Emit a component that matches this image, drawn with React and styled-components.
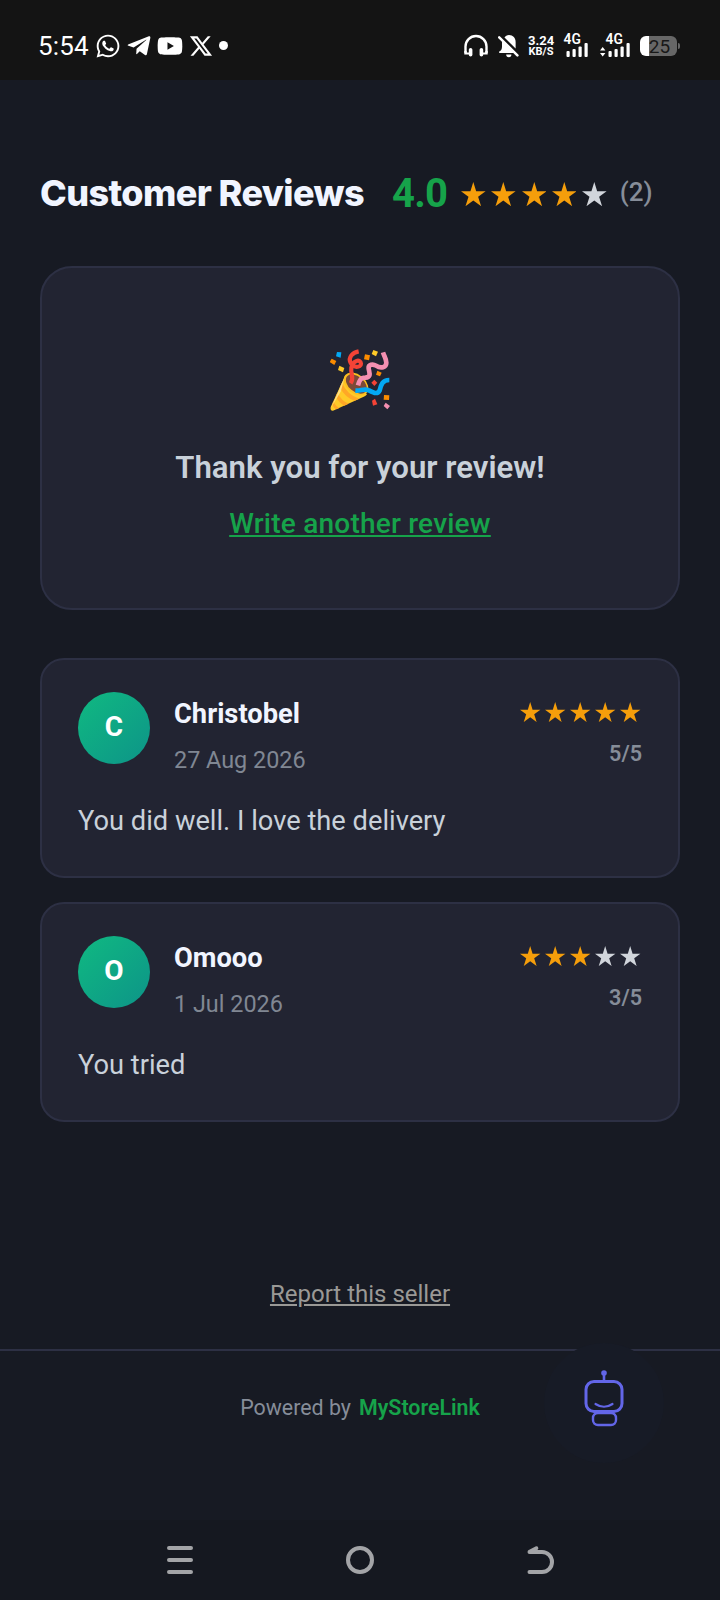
import React from 'react';
import styled, { createGlobalStyle } from 'styled-components';
import { FaWhatsapp, FaTelegramPlane, FaYoutube } from 'react-icons/fa';
import { RiTwitterXLine } from 'react-icons/ri';

const GlobalStyle = createGlobalStyle`
  * { box-sizing: border-box; }
  body {
    margin: 0;
    background: #171a23;
    font-family: Roboto, sans-serif;
  }
  svg { display: block; flex-shrink: 0; }
`;

// ------------- Layout -------------
const Screen = styled.div`
  position: relative;
  display: flex;
  flex-direction: column;
  width: 720px;
  height: 1600px;
  overflow: hidden;
`;

const Page = styled.main`
  flex: 1;
  padding: 86px 40px 0;
`;

// ------------- Status bar -------------
const StatusBar = styled.header`
  display: flex;
  align-items: center;
  justify-content: space-between;
  height: 80px;
  padding: 11px 43px 0 38px;
  background: #141414;
  color: #fff;
`;

const StatusGroup = styled.div`
  display: flex;
  align-items: center;
  gap: ${({ $gap }) => $gap}px;
`;

const Clock = styled.span`
  width: 51.5px;
  font-size: 26px;
  line-height: 30px;
  letter-spacing: 0.2px;
  white-space: nowrap;
`;

const Dot = styled.span`
  width: 9px;
  height: 9px;
  border-radius: 50%;
  background: #fff;
`;

const NetSpeed = styled.div`
  width: 26px;
  margin-right: -6px;
  font-weight: 700;
  text-align: center;
  white-space: nowrap;
`;

const NetValue = styled.div`
  font-size: 13px;
  line-height: 13px;
`;

const NetUnit = styled.div`
  font-size: 11px;
  line-height: 10px;
`;

const Signal = styled.div`
  position: relative;
  width: 31px;
  height: 24px;
  margin-right: ${({ $spaced }) => ($spaced ? 1.5 : 0)}px;
`;

const SignalLabel = styled.span`
  position: absolute;
  top: -1px;
  left: 6px;
  font-size: 13.8px;
  line-height: 13px;
  font-weight: 600;
`;

const Battery = styled.div`
  position: relative;
  width: 37px;
  height: 20px;
  padding-left: 2px;
  border-radius: 6px;
  background: linear-gradient(90deg, #fff 9px, #676767 9px);
  color: #181818;
  font-size: 19px;
  line-height: 21px;
  text-align: center;

  &::after {
    content: '';
    position: absolute;
    top: 7px;
    right: -3px;
    width: 2px;
    height: 6px;
    border-radius: 0 2px 2px 0;
    background: #676767;
  }
`;

// ------------- Reviews heading -------------
const HeadingRow = styled.div`
  display: flex;
  align-items: center;
  height: 54px;
  margin-bottom: 46px;
`;

const Heading = styled.h2`
  width: 352px;
  margin: 0;
  color: #f1f5ff;
  font-family: Inter, sans-serif;
  font-size: 36px;
  font-weight: 800;
  letter-spacing: -0.6px;
  white-space: nowrap;
`;

const Score = styled.span`
  width: 69px;
  color: #16a34a;
  font-size: 40px;
  font-weight: 700;
  letter-spacing: -0.8px;
`;

const Count = styled.span`
  margin-left: 13px;
  padding-bottom: 3px;
  color: #868d99;
  font-size: 26px;
  font-weight: 500;
`;

const StarRow = styled.div`
  display: flex;
  gap: ${({ $gap }) => $gap}px;
`;

const HeadingStars = styled.div`
  padding-top: 2px;
`;

// ------------- Cards -------------
const Card = styled.section`
  border: 2px solid #2d3044;
  background: #222432;
`;

const ThanksCard = styled(Card)`
  display: flex;
  flex-direction: column;
  align-items: center;
  height: 344px;
  margin-bottom: 48px;
  padding-top: 81px;
  border-radius: 32px;
`;

const ThanksTitle = styled.p`
  margin: 37px 0 18px;
  color: #c9d1da;
  font-size: 31.2px;
  line-height: 40px;
  font-weight: 600;
`;

const WriteLink = styled.a`
  color: #16a34a;
  font-size: 28px;
  line-height: 36px;
  font-weight: 500;
  letter-spacing: 0.22px;
  text-decoration: underline;
`;

const ReviewCard = styled(Card)`
  height: 220px;
  margin-bottom: 24px;
  padding: 32px 36px;
  border-radius: 24px;
`;

const ReviewTop = styled.div`
  display: flex;
  height: 107px;
`;

const Avatar = styled.div`
  width: 72px;
  height: 72px;
  margin-right: 24px;
  border-radius: 50%;
  background: linear-gradient(135deg, #10b981, #0d9488);
  color: #fff;
  font-size: 28px;
  line-height: 69px;
  font-weight: 700;
  text-align: center;
`;

const Author = styled.div`
  flex: 1;
`;

const Name = styled.div`
  padding-top: 1px;
  color: #f1f5ff;
  font-size: 27.3px;
  line-height: 43px;
  font-weight: 700;
`;

const ReviewDate = styled.div`
  margin-top: 6px;
  color: #808793;
  font-size: 23.4px;
  line-height: 36px;
`;

const Rating = styled.div`
  display: flex;
  flex-direction: column;
  align-items: flex-end;
  padding-top: 10px;
`;

const CardStars = styled.div`
  padding-right: 1.5px;
`;

const RatingValue = styled.span`
  margin-top: 19px;
  color: #868d99;
  font-size: 21.6px;
  line-height: 26px;
  font-weight: 600;
`;

const Comment = styled.p`
  margin: 0;
  color: #c9d1da;
  font-size: 27.25px;
  line-height: 44px;
`;

// ------------- Footer -------------
const ReportRow = styled.div`
  margin-top: 156px;
  text-align: center;
`;

const ReportLink = styled.a`
  color: #9a9996;
  font-size: 24px;
  line-height: 32px;
  text-decoration: underline;
`;

const Footer = styled.footer`
  display: flex;
  justify-content: center;
  gap: 8px;
  height: 171px;
  padding-top: 43px;
  border-top: 2px solid #2d3044;
  color: #868d99;
  font-size: 21.4px;
  line-height: 28px;

  strong {
    color: #16a34a;
    font-weight: 600;
  }
`;

const ChatButton = styled.button`
  position: absolute;
  left: 544px;
  top: 1343px;
  width: 120px;
  height: 120px;
  padding: 0 36px 6px;
  border: 0;
  border-radius: 50%;
  background: #171b26;
`;

const NavBar = styled.nav`
  display: flex;
  align-items: center;
  justify-content: center;
  gap: 152px;
  height: 80px;
  background: #151820;
`;

// ------------- Icons -------------
function Star({ size, filled }) {
  return (
    <svg width={size} height={size} viewBox="0 0 24 24">
      <path
        d="M12 0l2.8 9.1H24l-7.3 5.3 2.9 9.2L12 18l-7.6 5.6 2.9-9.2L0 9.1h9.2z"
        fill={filled ? '#f59e0b' : '#d1d5db'}
      />
    </svg>
  );
}

function Stars({ value, size, gap }) {
  return (
    <StarRow $gap={gap}>
      {[1, 2, 3, 4, 5].map(n => (
        <Star key={n} size={size} filled={n <= value} />
      ))}
    </StarRow>
  );
}

function Headphones() {
  return (
    <svg width="24" height="24" viewBox="0 0 24 24">
      <path d="M1.5 19v-6.5a10.5 10.5 0 0 1 21 0V19" fill="none" stroke="#fff" strokeWidth="2.4" />
      <rect x="4.8" y="14" width="3.6" height="8.6" rx="1.8" fill="#fff" />
      <rect x="15.6" y="14" width="3.6" height="8.6" rx="1.8" fill="#fff" />
      <path d="M.3 17v3.4h4.9v-2H2.7V17zM23.7 17v3.4h-4.9v-2h2.5V17z" fill="#fff" />
    </svg>
  );
}

function BellOff() {
  return (
    <svg width="21" height="24" viewBox="0 0 21 24">
      <path d="M6.5 3.5C7.4 2 9 1 11 1c4 0 6.6 3 6.6 6.8v6.6z" fill="#fff" />
      <path d="M4 7.2 16 19H1.2v-1.4c2-1 2.8-2.4 2.8-4.8z" fill="#fff" />
      <path d="M8.2 20.6h5.2a2.6 2.6 0 0 1-5.2 0z" fill="#fff" />
      <path d="M1.2 3.4 19.4 21.4" stroke="#fff" strokeWidth="2.5" strokeLinecap="round" />
    </svg>
  );
}

function SignalBars({ arrows }) {
  return (
    <svg width="31" height="24" viewBox="0 0 31 24">
      {arrows && <path d="M0 16.4 2.7 13l2.7 3.4zM0 19 2.7 22.6l2.7-3.6z" fill="#fff" />}
      <rect x="8.5" y="17" width="3.2" height="6" rx="1" fill="#fff" />
      <rect x="14.5" y="15" width="3.2" height="8" rx="1" fill="#fff" />
      <rect x="20.5" y="12.5" width="3.2" height="10.5" rx="1" fill="#fff" />
      <rect x="26.5" y="9" width="3.2" height="14" rx="1" fill="#fff" />
    </svg>
  );
}

function PartyPopper() {
  return (
    <svg width="60" height="62" viewBox="90 57 180 186">
      <path d="M92 231 134 140 201 193Q196 200 178 206L99 242Q90 243 92 231z" fill="#ffca28" />
      <path d="M126 158 119 172Q137 205 164 212L178 206Q141 194 126 158z" fill="#ffa726" />
      <path d="M112 188 107 199Q119 222 133 227L146 221Q124 212 112 188z" fill="#ffa726" />
      <path d="M100 214 97 222Q101 235 109 238L118 234Q107 229 100 214z" fill="#ffa726" />
      <path d="M134 141 94 232 122 185z" fill="#ffe082" />
      <ellipse cx="168" cy="162" rx="42" ry="28" transform="rotate(40 168 162)" fill="#fdbf1f" />
      <ellipse cx="169" cy="162" rx="36" ry="23" transform="rotate(40 169 162)" fill="#7b4a38" />
      <g fill="none" strokeWidth="14">
        <path d="M176 64C156 68 145 82 151 97C158 115 183 114 183 101C182 86 158 90 154 113C151 133 164 142 152 160" stroke="#f44336" strokeWidth="12.5" />
        <path d="M174 166C178 151 182 143 196 143C215 141 208 128 206 116C204 103 219 101 228 107C243 117 259 112 259 98C259 87 253 80 249 67" stroke="#f48fb1" />
        <path d="M166 182C184 183 191 175 207 181C224 190 233 193 239 181C243 165 247 150 268 150" stroke="#03a9f4" />
      </g>
      <g fill="#fb8c00">
        <path d="M95 86 109 93 103 105 89 96z" />
        <path d="M195 73 210 76 207 91 192 88z" />
        <path d="M232 122 245 128 240 139 228 134z" />
        <path d="M252 195 268 196 267 210 251 209z" />
      </g>
      <path d="M111 66 124 67 122 83 108 79z" fill="#03a9f4" />
      <path d="M118 107 133 114 129 127 114 120z" fill="#ffca28" />
      <path d="M220 60 234 65 228 79 215 72z" fill="#ffca28" />
      <path d="M223 149 232 158 223 168 214 158z" fill="#f44336" />
      <path d="M225 206 232 223 219 227 216 212z" fill="#f44336" />
      <path d="M257 218 270 228 262 238 251 228z" fill="#f48fb1" />
    </svg>
  );
}

function Robot() {
  return (
    <svg width="48" height="60" viewBox="0 0 48 60" fill="none" stroke="#6366e8">
      <circle cx="24" cy="3" r="2.8" fill="#6366e8" stroke="none" />
      <path d="M24 4v7" strokeWidth="2.6" />
      <rect x="6" y="11.5" width="36" height="30" rx="8" strokeWidth="3" />
      <path d="M15.5 34Q24 39.5 32.5 34" strokeWidth="2.2" strokeLinecap="round" />
      <rect x="13" y="43" width="23" height="12" rx="5" strokeWidth="2.4" />
    </svg>
  );
}

const reviews = [
  { name: 'Christobel', date: '27 Aug 2026', rating: 5, comment: 'You did well. I love the delivery' },
  { name: 'Omooo', date: '1 Jul 2026', rating: 3, comment: 'You tried' },
];

function App() {
  return (
    <Screen>
      <GlobalStyle />
      <StatusBar>
        <StatusGroup $gap={5}>
          <Clock>5:54</Clock>
          <FaWhatsapp size={26} />
          <FaTelegramPlane size={26} />
          <FaYoutube size={26} />
          <RiTwitterXLine size={26} />
          <Dot />
        </StatusGroup>
        <StatusGroup $gap={9.5}>
          <Headphones />
          <BellOff />
          <NetSpeed>
            <NetValue>3.24</NetValue>
            <NetUnit>KB/S</NetUnit>
          </NetSpeed>
          <Signal $spaced>
            <SignalLabel>4G</SignalLabel>
            <SignalBars />
          </Signal>
          <Signal>
            <SignalLabel>4G</SignalLabel>
            <SignalBars arrows />
          </Signal>
          <Battery>25</Battery>
        </StatusGroup>
      </StatusBar>

      <Page>
        <HeadingRow>
          <Heading>Customer Reviews</Heading>
          <Score>4.0</Score>
          <HeadingStars>
            <Stars value={4} size={24.6} gap={5.7} />
          </HeadingStars>
          <Count>(2)</Count>
        </HeadingRow>

        <ThanksCard>
          <PartyPopper />
          <ThanksTitle>Thank you for your review!</ThanksTitle>
          <WriteLink>Write another review</WriteLink>
        </ThanksCard>

        {reviews.map(review => (
          <ReviewCard key={review.name}>
            <ReviewTop>
              <Avatar>{review.name[0]}</Avatar>
              <Author>
                <Name>{review.name}</Name>
                <ReviewDate>{review.date}</ReviewDate>
              </Author>
              <Rating>
                <CardStars>
                  <Stars value={review.rating} size={20.4} gap={4.6} />
                </CardStars>
                <RatingValue>{review.rating}/5</RatingValue>
              </Rating>
            </ReviewTop>
            <Comment>{review.comment}</Comment>
          </ReviewCard>
        ))}

        <ReportRow>
          <ReportLink>Report this seller</ReportLink>
        </ReportRow>
      </Page>

      <Footer>
        <span>Powered by</span>
        <strong>MyStoreLink</strong>
      </Footer>

      <ChatButton>
        <Robot />
      </ChatButton>

      <NavBar>
        <svg width="28" height="28" viewBox="0 0 28 28" stroke="#a3a4a7" strokeWidth="4" strokeLinecap="round">
          <path d="M3 2h22M3 14h22M3 26h22" />
        </svg>
        <svg width="28" height="28" viewBox="0 0 28 28" fill="none" stroke="#a3a4a7" strokeWidth="4">
          <circle cx="14" cy="14" r="12" />
        </svg>
        <svg width="28" height="28" viewBox="0 0 28 28" fill="none" stroke="#a3a4a7" strokeWidth="4" strokeLinecap="round">
          <path d="M3.5 6H16a10 10 0 0 1 0 20H3.5" />
          <path d="M1.8 4.6 10 .3Q12.5 0 12.3 2.6L11 5z" fill="#a3a4a7" stroke="none" />
        </svg>
      </NavBar>
    </Screen>
  );
}

export default App;
